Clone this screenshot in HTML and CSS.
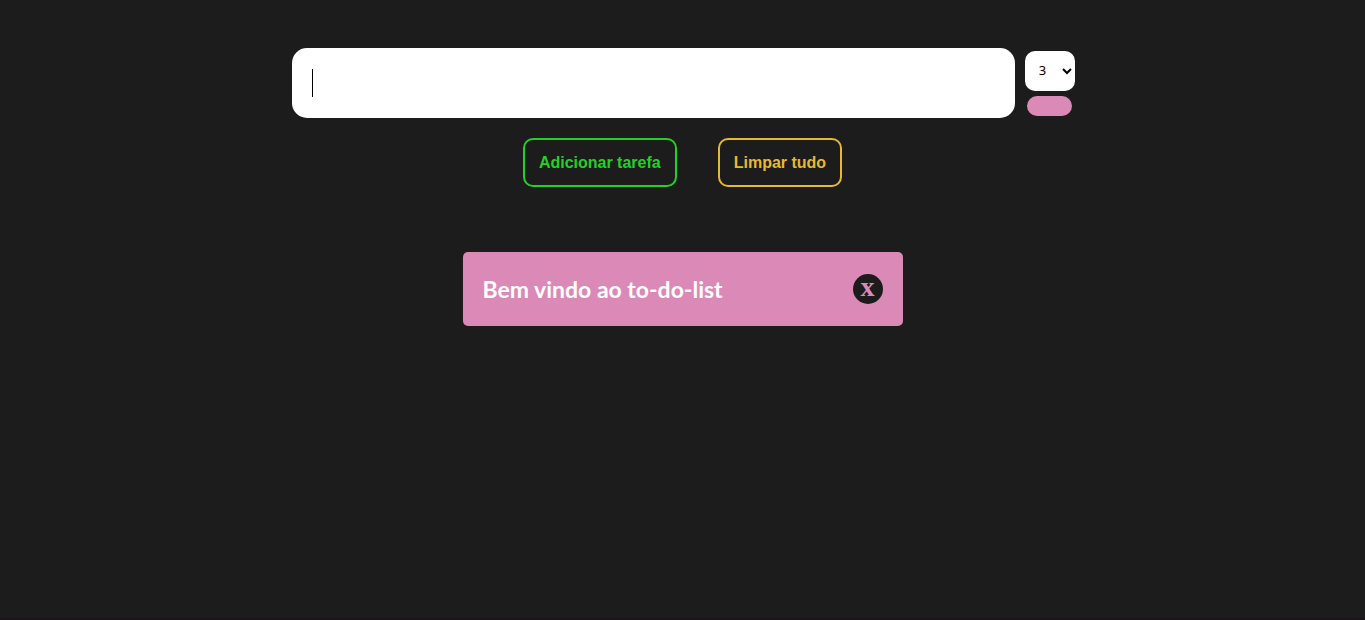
FILE: index.html
```html
<!DOCTYPE html>
<html lang="pt-BR">
<head>
  <meta charset="utf-8">
  <meta name="viewport" content="width=device-width, initial-scale=1">
  <title>To-do list</title>
  <link rel="stylesheet" href="styles.css">
</head>
<body>
  <main class="page">
    <form class="task-form">
      <div class="entry">
        <input class="task-input" type="text" aria-label="Tarefa">
        <div class="options">
          <select class="priority" aria-label="Cor da tarefa">
            <option>1</option>
            <option>2</option>
            <option selected>3</option>
          </select>
          <span class="swatch"></span>
        </div>
      </div>
      <div class="actions">
        <button class="button button-add" type="button">Adicionar tarefa</button>
        <button class="button button-clear" type="button">Limpar tudo</button>
      </div>
    </form>
    <ul class="tasks">
      <li class="task">
        <span class="task-text">Bem vindo ao to-do-list</span>
        <button class="remove" type="button" aria-label="Remover tarefa">x</button>
      </li>
    </ul>
  </main>
</body>
</html>
```

FILE: styles.css
```css
* {
  box-sizing: border-box;
}

body {
  margin: 0;
  background: #1c1c1c;
  font-family: Lato, sans-serif;
}

.page {
  min-height: 100vh;
  padding-top: 48px;
  border-bottom: 2px solid #1c151a;
}

.entry {
  display: flex;
  justify-content: center;
  align-items: center;
  gap: 10px;
  padding-left: 2px;
}

/* The caret is painted as a one-pixel bar at the start of the field. */
.task-input {
  width: 53%;
  height: 70px;
  padding: 20px;
  border: 0;
  border-radius: 15px;
  outline: 0;
  background: linear-gradient(#000, #000) 20px 21px / 1px 28px no-repeat #fff;
  caret-color: transparent;
  font-size: 24px;
}

.options {
  display: flex;
  flex-direction: column;
  align-items: center;
  gap: 5px;
  width: 50px;
}

.priority {
  width: 50px;
  height: 40px;
  padding: 0 2px 1px 10px;
  border: 0;
  border-radius: 10px;
  background: #fff;
  color: #000;
  font-family: "Noto Sans", sans-serif;
  font-size: 13px;
}

.swatch {
  width: 45px;
  height: 20px;
  border-radius: 10px;
  background: #db89b7;
}

.actions {
  display: flex;
  justify-content: center;
  gap: 41px;
  margin-top: 20px;
}

.button {
  height: 49px;
  padding: 0 14px;
  border: 2px solid;
  border-radius: 10px;
  background: transparent;
  font-family: "Liberation Sans", Arial, sans-serif;
  font-size: 16px;
  font-weight: 700;
}

.button-add {
  color: #25cf25;
}

.button-clear {
  color: #e5b934;
}

.tasks {
  display: flex;
  flex-direction: column;
  align-items: center;
  margin: 65px 20px 0;
  padding: 0;
  list-style: none;
}

.task {
  display: flex;
  justify-content: space-between;
  align-items: center;
  width: 100%;
  max-width: 440px;
  min-height: 74px;
  padding: 20px;
  border-radius: 5px;
  background: #db89b7;
}

.task-text {
  color: #fff;
  font-size: 23px;
  font-weight: 700;
}

.remove {
  width: 30px;
  height: 30px;
  padding: 0 0 4px;
  border: 0;
  border-radius: 50%;
  background: #1c1c1c;
  color: #db89b7;
  font-family: "Liberation Serif", "Times New Roman", serif;
  font-size: 28px;
  font-weight: 700;
  line-height: 24px;
}
```
